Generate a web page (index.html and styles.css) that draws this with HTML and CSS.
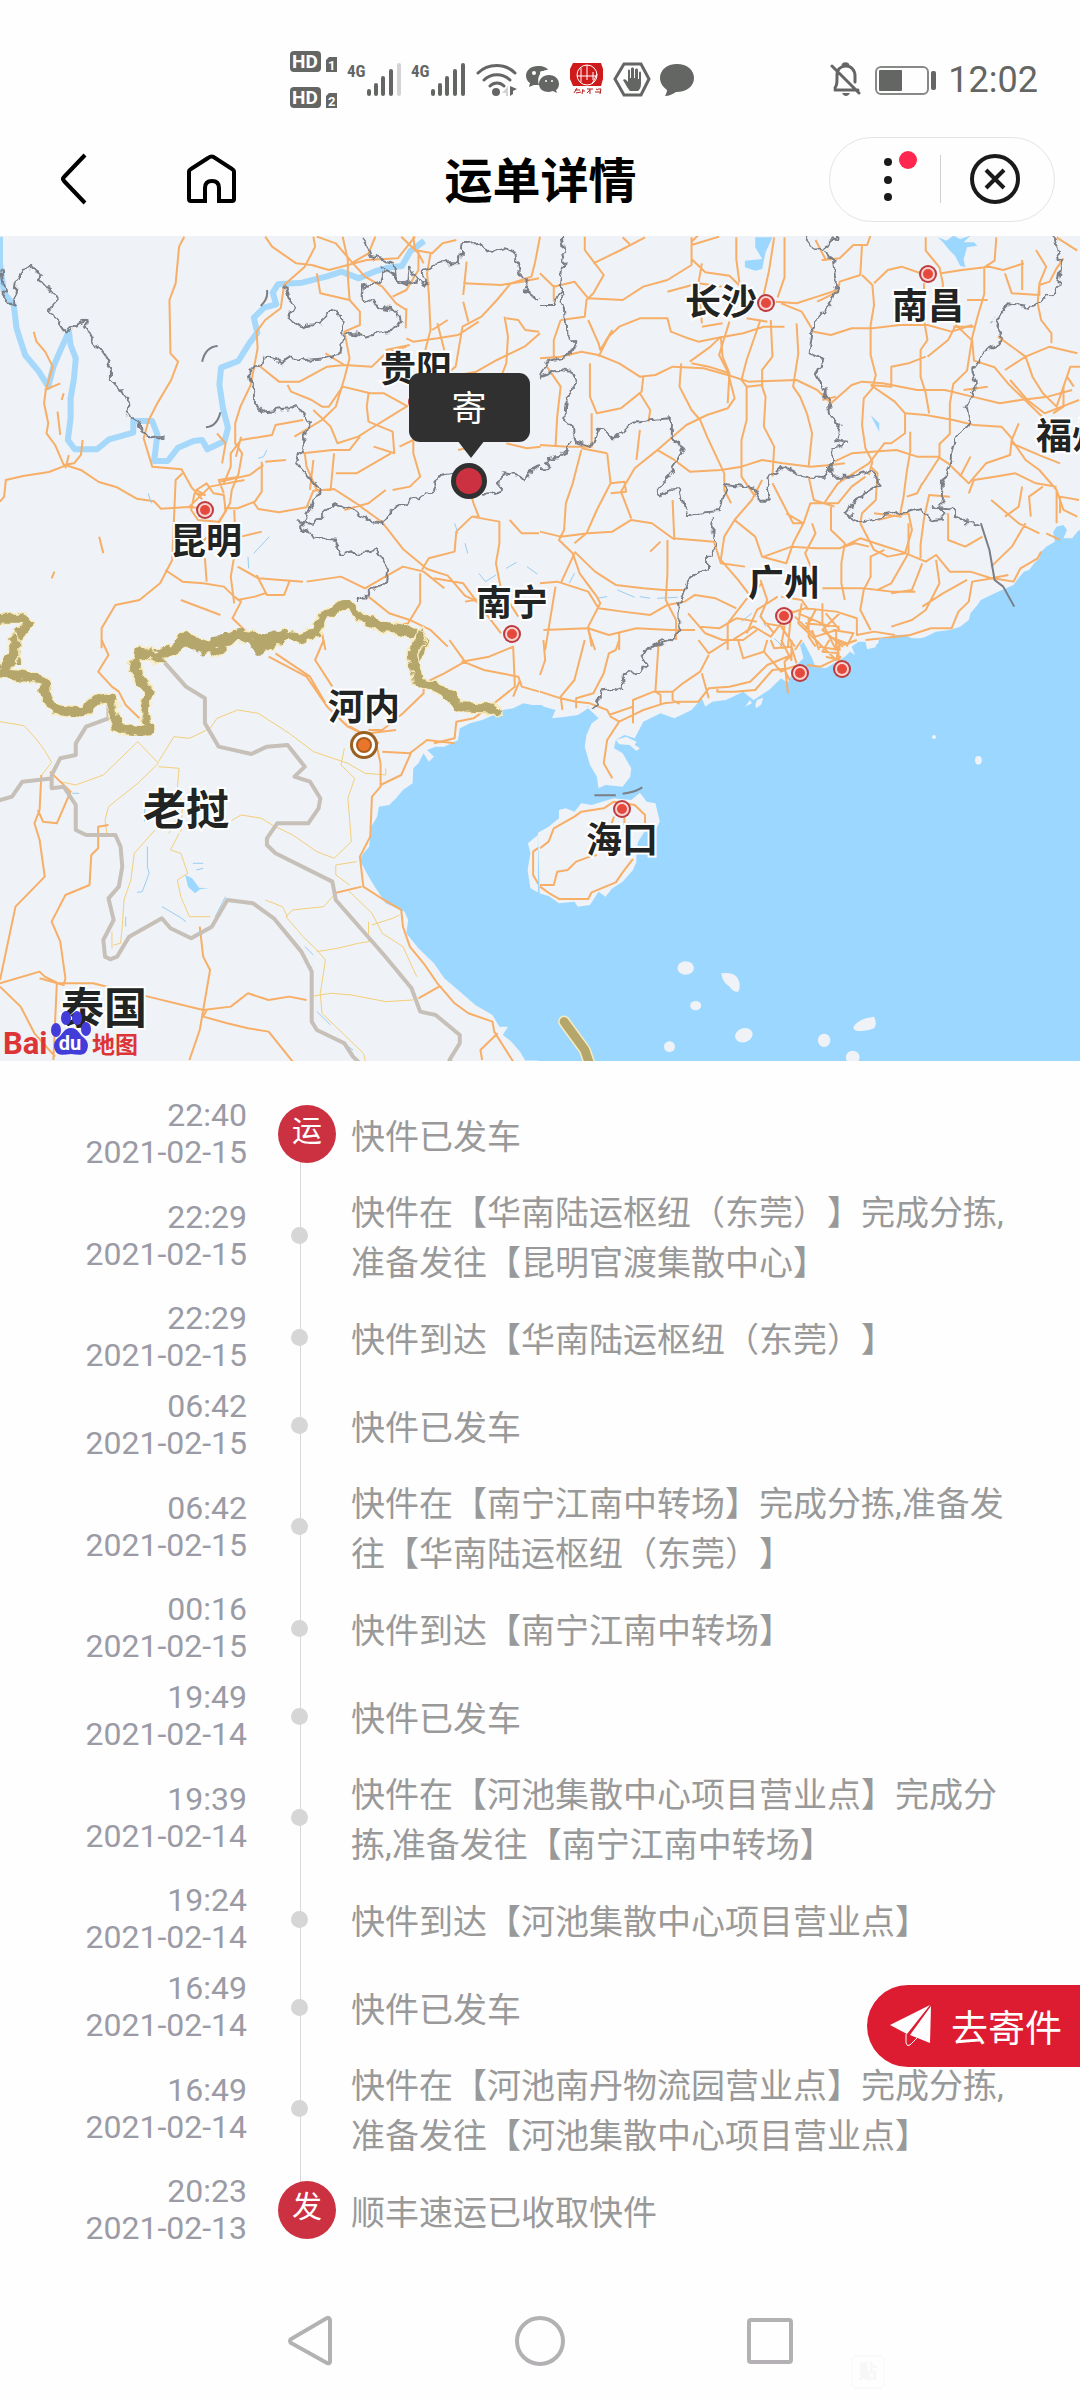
FILE: index.html
```html
<!DOCTYPE html>
<html lang="zh-CN">
<head>
    <meta charset="UTF-8">
    <meta name="viewport" content="width=device-width, initial-scale=1.0">
    <title>运单详情</title>
    <link rel="stylesheet" href="styles.css">
</head>
<body>

<div class="status-bar">
    <div class="status-icons">
        <svg width="50" height="60" viewBox="289 50 50 60">
            <rect x="290" y="51" width="31" height="21" rx="4"/>
            <rect x="290" y="87" width="31" height="21" rx="4"/>
            <path d="M326 60l3-3h8v15h-11zM326 96l3-3h8v15h-11z"/>
            <text class="st-light" x="292" y="68" font-size="19">HD</text>
            <text class="st-light" x="292" y="104" font-size="19">HD</text>
            <text class="st-light" x="328" y="70" font-size="13">1</text>
            <text class="st-light" x="328" y="106" font-size="13">2</text>
        </svg>
        <svg width="56" height="60" viewBox="348 50 56 60">
            <text class="st-net" x="348" y="77">4G</text>
            <path class="st-bars" d="M370 91v3M377 85v9M384 78v16M392 71v23"/>
            <path class="st-bars st-off" d="M400 65v29"/>
        </svg>
        <svg width="56" height="60" viewBox="348 50 56 60">
            <text class="st-net" x="348" y="77">4G</text>
            <path class="st-bars" d="M370 91v3M377 85v9M384 78v16M392 71v23M400 65v29"/>
        </svg>
        <svg width="42" height="60" viewBox="475 50 42 60">
            <path class="st-line" d="M478 73c10-10 27-10 37 0M484 80c7-7 19-7 26 0M490 86c4-4 10-4 14 0"/>
            <circle cx="496" cy="92" r="4"/>
            <path d="M510 86v10l3-2v-3l4-2z"/>
            <path class="st-off-fill" d="M508 86v10h-2v-3h-4z"/>
        </svg>
        <svg width="36" height="60" viewBox="525 50 36 60">
            <path d="M538 66c-7 0-12 4-12 10 0 3 2 6 4 7l-1 4 5-2h5c-3-9 3-16 9-15-1-2-4-4-10-4z"/>
            <path d="M549 75c-6 0-10 4-10 9s4 8 10 8l4-1 4 2-1-3c2-1 3-4 3-6 0-5-4-9-10-9z"/>
            <g fill="#fff"><circle cx="534" cy="73" r="2"/><circle cx="542" cy="73" r="2"/><circle cx="546" cy="81" r="1"/><circle cx="552" cy="81" r="1"/></g>
        </svg>
        <svg width="36" height="60" viewBox="570 50 36 60">
            <path fill="#cf1a1c" d="M574 63h28l2 6v10l-2 7h-28l-3-7v-10z"/>
            <g fill="none" stroke="#fff" stroke-width="1"><circle cx="588" cy="75" r="10"/><path d="M578 76h20M588 65v15M582 68v14M594 72v8M598 74l-5 10"/></g>
            <path fill="none" stroke="#b0201f" stroke-width="1" d="M576 90h5M577 93l5-1M575 93l3-5M584 89l-1 5M583 91h3M588 89h6M591 89v5M588 93l3-3M597 89l2 1M596 92h6M599 89h3l-1 5"/>
        </svg>
        <svg width="38" height="60" viewBox="613 50 38 60">
            <path class="st-line" d="M624 64h17l8 15-8 16h-17l-9-16z"/>
            <path d="M623 80c2-2 4 1 5 2v-11c0-2 2-2 2 0v7h1v-9c0-2 3-2 3 0v9h1v-8c0-2 3-2 3 0v9h1v-6c0-2 2-2 2 0v11c0 4-2 6-3 7h-8c-2-2-5-8-7-11z"/>
        </svg>
        <svg width="36" height="60" viewBox="660 50 36 60">
            <path d="M678 64c-10 0-17 6-17 14 0 5 3 9 7 12 0 2-1 4-2 6 4 0 8-2 11-4 11 0 18-6 18-14s-7-14-17-14z"/>
        </svg>
    </div>
    <div class="status-right">
        <svg width="32" height="36" viewBox="830 62 32 36">
            <path class="st-line" d="M835 90h23M835 88c2-3 2-5 2-13 0-6 4-9 9-9s9 4 9 10v6M832 66l27 27M843 66c0-3 5-3 5 0"/>
            <path d="M842 93h8c-2 4-6 4-8 0z"/>
        </svg>
        <svg width="62" height="30" viewBox="877 64 62 30">
            <rect x="879" y="66" width="52" height="27" rx="5" fill="none" stroke="#878987" stroke-width="2"/>
            <rect x="882" y="69" width="23" height="21" rx="1"/>
            <rect x="934" y="70" width="5" height="19" rx="2"/>
        </svg>
        <span class="clock">12:02</span>
    </div>
</div>

<header class="nav-bar">
    <div class="nav-left">
        <button type="button" class="icon-btn" aria-label="返回">
            <svg width="50" height="54" viewBox="48 152 50 54"><path d="M85 155l-21 22q-2 2 0 4l21 22"/></svg>
        </button>
        <button type="button" class="icon-btn" aria-label="首页">
            <svg width="54" height="54" viewBox="185 152 54 54"><path d="M189 172q0-2 2-3l17-11q4-3 7 0l17 11q2 1 2 3v27q0 2-2 2h-13v-13q0-7-7-7t-7 7v13h-14q-2 0-2-2z"/></svg>
        </button>
    </div>
    <h1>运单详情</h1>
    <div class="capsule">
        <button type="button" aria-label="更多">
            <svg width="110" height="83" viewBox="830 138 110 83"><circle cx="888" cy="162" r="4"/><circle cx="888" cy="180" r="4"/><circle cx="888" cy="197" r="4"/><circle class="unread" cx="908" cy="160" r="9"/></svg>
        </button>
        <button type="button" class="close" aria-label="关闭">
            <svg width="114" height="83" viewBox="940 138 114 83"><circle cx="995" cy="179" r="23"/><path d="M986 170l18 18M1004 170l-18 18"/></svg>
        </button>
    </div>
</header>

<svg class="map" viewBox="0 0 1080 825" role="img" aria-label="物流地图">
    <defs>
        <filter id="rough" x="-5%" y="-5%" width="110%" height="110%" color-interpolation-filters="sRGB">
            <feTurbulence type="fractalNoise" baseFrequency="0.035" numOctaves="2" seed="4"/>
            <feDisplacementMap in="SourceGraphic" scale="32" xChannelSelector="R" yChannelSelector="G"/>
        </filter>
        <g id="city">
            <circle r="9" fill="#bd3b3e"/>
            <circle r="7" fill="#f9d3d0"/>
            <circle r="5" fill="#e5493d"/>
        </g>
    </defs>

    <!-- north west -->
    <g class="tile" transform="translate(0 -6) scale(.3444 .3333)">
        <path class="river" d="M0 20v80l12 90 28 35 8 70 25 80 40 50 27 45 15-60 25-60 20-45 5 40 15 40-5 60-10 60 0 60-8 65 20 28h65l35-30 70-20v-35h55l15 40-7 60-3 20h40l30-40 45-20 25-3 15 28 50-25 10-40-15-60-10-70 5-50 50-20 30-50 25-35-10-45 30-30 35-10-10-35 15-25 70-5 70-18 45-15 50 20 50-22 35-10 40-5 25-45 40-30"/>
        <g class="road">
            <path d="M535 20l-15 30-10 110-18 50 3 160 22 25-20 55-40 70-25 50-15 55 25 85 85 8 30 55 30 35"/>
            <path d="M0 815l12-15 5-50 50-12 75-12 50-20 45 15 50 35 50 15 60 35 50 8 20 22 80-5 60 5"/>
            <path d="M98 305l8 30 25 30 22 45-20 70-5 40 12 60-5 30 25 35 25 60 30-5 20-25 5-45M167 545l8 70M190 715l10-40M288 920l12 50M158 1025l-8 20M185 490l-6 20M525 1110l115 45M130 480l45-20"/>
            <path d="M770 20l20 30 70 50 45 5 50 15 55-15 55-15 90-5 50-65M910 20l5 30-30 60-60 55-10 70-45 35-25 35 3 50-20 110-30 65-15 50 0 60 20 30-10 60-20 50-5 40-45 80-40 40"/>
            <path d="M995 20l15 70 0 50 5 70 30 35 0 40-45 20 15 80-15 60-25 85-40 40-80 50M920 20l55 20 50 60 35 40 50 30 40 50 30 20M920 130l10 60 85 20M1090 20l-20 50-50 30M1165 20l50 50 0 50-35 60-40 20M1200 20l5 40 50 10 30-30 40-10M1250 70l-10 60 5 60 5 110-15 60M1180 235l-2 60M1215 70l15 30"/>
            <path d="M1355 95l-10 100M1345 160l110 5 60-10 50-10M1568 20l-15 80-10 40-60 20-40 50-45 50-55 30-10 60-10 60-50 40M1345 215l15 60M1180 325l20 10 70-10 60-10 60-40M1120 360l70-15M1255 300l45-30M1270 280l20 80M1465 260l10 60-5 80-15 40M1470 265l35 5 20 30 40 5M1568 310l-45 40-80 40-60 35-50 10"/>
            <path d="M750 405l60 50 60 0 80-45 50-5 80 5 40-40 60-20M835 465l10 20 60 25 30 20 20 0 40-60 80 20 40 0 70 40M1070 490l-5 40 5 45 70 30 5 65-60-20M1180 530l-110 70-30 20-60 20-20-50-50-50M1045 620l-30 40-50 0-85 10M885 670l5 40 30 70 40 0 10-110M975 730l60 0 50-30 50-30M880 570l-80 15-10 30-90 15-30 40 0 40-20 50M760 695l0 90-20 30-50 20-40 0M770 695l60-5M640 755l85-20 40-30M630 610l25 30-10 60M700 620l-15 60M945 370l55 35M900 780l10-90M1160 650l40-20"/>
            <path d="M735 815l15 22 60 10 80-15 20-50 60-5 60 40 80 60 60 80 70 60 60 20 50 60 40 20M1000 840l70-20 50-40M1140 780l50-10 30-30-20-70 0-40M1225 1020l20-35 75-20 5-60 45-45h20l-15-40-15-50M1370 860l80 15 0 65-10 60 15 80 50 80M1480 870l35 40h50M1220 1030l0 90-35 60-45 10M1260 1045l85 15 50 70 60 80M1330 660l45-10 20-30M1470 640l60 15 40-5M1350 1115l60-10 60 20"/>
            <path d="M530 730l-20 20-5 120-5 120-35 70-60 50-70 15-40 70 0 60M480 1020l50 35 60 5 60 10 30 30 20 15-25 50 50 50 30 50M680 840l5 110-15 90 10 80M690 1010l60 35 130 10M745 1035l30 60 50 0 15-40M890 1055l100-15 70 35 50-30 60-35 60 15 60 50M700 920l60-15M595 985l5 70M1070 1100l60 50 60 20 60 30 50 50M690 1110l50-10 30-10M935 1210l10 50"/>
            <path d="M595 795l-30-5-10 50 20 30 60 5 20-30-5-50-30-5-20-30-30 20zM550 830l60-60 100-20M650 790l-15-40 60-10"/>
        </g>
        <path class="lake" d="M775 660l-10 20-15 5M782 920l-45 50M720 980l2 35M1320 880l10 30M1350 940l8 30M1390 1030l20 25 30-20M1470 1015l30-18M1530 1010l30 22M430 790l10 30"/>
        <g class="border" filter="url(#rough)">
            <path d="M0 120l12 70 28 40 5-70 40-55 60 70 25 35-25 30 45 70 20-20 35-15 40 80 40 60 0 40 50 55-10 40 30 20 10 25 30 30 40-5"/>
            <path d="M1055 20l20 60 70 20 10 60 30 5 5-55 25 50 20 10-5-50 45-20 60 0 5-60 60-5 20 35 50-15 30 15 10 65 25 20-5 30 30 25"/>
            <path d="M825 165l10 30 20 35-20 30 40 30 50-10 35-35 30 10 5 60-10 60-40 10-60 5-40-10-30 20-40-20-55 60 20 50 0 35 20 20 80-10 20-15 40 60-20 60-20 60 70 80-40 80-10 25 25 40 70 10 20 40 60-10 40-5 30 50-5 60-40 10-40 40"/>
            <path d="M1000 310l50 10 90-20 20-20-10-40-30-5-70-30 5-40 50-10 10-40 60 45 30-10M865 870l40 15 60-60 60 15 60 40 25 5 25-45 80-40 45-15 15-50 60-10M1400 795l50-15 10-50 50 10 20 20 15-45 20-10"/>
        </g>
        <path class="border" d="M775 180q5 25-18 48M587 395q10-45 45-47M598 592q32-2 42-45"/>
        <g class="nation" filter="url(#rough)">
            <path class="nation-glow" d="M-20 1165h85l15 20-40 50 5 60M420 1280l40-5 50-15 30-40 50 25 40 20 50-50 70 5 30 30 40-35 50 10 50-20 15-45 70-40 40 40 60 30 60 10 55 10 15 25-30 50"/>
            <path d="M-20 1165h85l15 20-40 50 5 60M420 1280l40-5 50-15 30-40 50 25 40 20 50-50 70 5 30 30 40-35 50 10 50-20 15-45 70-40 40 40 60 30 60 10 55 10 15 25-30 50"/>
        </g>
    </g>

    <!-- north east -->
    <g class="tile" transform="translate(540 -6) scale(.3444 .3333)">
        <path class="sea" d="M1580 890l-20 15-15 20h-25l10-25-10-15-20 5-10 15 5 30-25 15-15 15-5 20-15 15-15 20-15 5-20 25-10 15-45 20-20 10-30 15-10 15-20 25-5 20-25 20-30 10-40 5-30 15-30 10-30-15h-30l-30 15-25 15 0 30h610z"/>
        <path class="sea" d="M625 22h50l-20 45-10 50-20 5-30-10v-20l50-5-20-35zM1155 22l15 15 20 25 15 15 15 30 15 5-5-25 10-35 30-5-10-10-30 0 20-20-30 10-20-10-20 15zM960 555l25 25 0 25-15-30z"/>
        <path class="lake" d="M165 1105l30-5M85 1060l15-30M225 1080l50 22M290 1100l30 5M340 1105l60-3M585 1175l30-25M640 1150l15 40M680 1225l20 20"/>
        <g class="road">
            <path d="M130 20l0 40 55 75-30 55-20 20-5 50-70 10M155 100l80-40 70-38M240 22l20 20M0 130l40 40 60-15 40 50 100 5 60-40 70-20 70-45v-70l20-20M40 165v50M440 22l0 65 40 40 70 10 30 30-10-80 0-65M470 100l-10 60 10 120M370 185l90-25 70 10M440 45l80-25"/>
            <path d="M0 385l60-5 60-15 50 10 60 25 60 40 45-5 50-25 90 5 70 20 60 20 140-5 60 30 40 40 60-55 30-10 60 5 100 20 80 0 80 20 80 20 60-10 80-10 70-20M170 380l30-60 30-30 60-25 80 0 10 40 50 20 30 10 50-10 80-15 60-20 60 0M210 300l-35 60-5-20-30-70M145 400l0 100 20 50 70-15 60-50 5-45M150 550l0 100-70 0-80-5M290 490l30 50-5 35"/>
            <path d="M20 410l40 60-10 90-5 90M120 660l-25 100-20 60-5 80-15 30 40 40 20 60 50 70 10 20-35 70 10 60M195 670l10 90-40 80-30 70-35 30M205 760l40-5 5 30-45 5M0 905l60 15 80-10 70-5 55-35 60 10 60 45 60 5 60 5 20 65 70 10M265 865l-30-80 40-70 60-50 90-80 60-30 60-20 20-30-20-80-25-50 30-100M120 655l75 15M280 690l10-90M340 660l50 30 45 35 90-5 60-10 60-20 60 10 80 10 60-5 40-5M410 400l-5 70 35 70 25 30 20 50 50 110 0 50 20 40"/>
            <path d="M680 22l-15 100-15 70M710 22l0 120-20 60M685 215l60 5 60-20 60-20M700 220l60 25 35 60 50 10 60-20 60 0 80-10 80 0 70 20 60-20M640 270l-20 60-20 60-15 60 15 20 0 100-15 60 0 110 40 60M670 270l5 110-30 40 0 50 10 30-5 90 30 60-5 90M745 280l5 90-15 100 20 30 20 50 15 60-10 100M600 265l60 10M600 470l45-5M435 395l60-45 30-30M525 320l5 60 20 50-5 90M440 400l50 10 60 20"/>
            <path d="M800 30l30 60-10 0 50-5 40-40 40 0 10-30M820 90l50-5M935 45l-5 90-60 20-5 30-60 30M935 135l30 30 5 60-10 60 0 90 15 60-10 40-25 30-5 80 10 70 20 40-10 40M970 160l40-40 40-10 70 25M1120 22l0 40 40 50 10 50-5 60 30 50 60 60 5 60 60 20 40 50 60 60 60 60M1115 160l0 110 10 60-20 30 0 80 15 50 10 60M1125 380l60-50 20-40M1165 130l60-10 80-10 40 10 60-20M1325 22l-5 70-30 20 0 80-20 70-15 60-15 100-40 40-10 60 0 90-30 30 0 40-50 80M960 465l60 5 0-60 50-10 50-20M960 465l70 50 30 35 0 60-40 30-20 0-45 60-90 60-40 60"/>
            <path d="M1060 550l60 5 80 15 60 15 80 5 30 35-5 50-70 25-50 60-60-60-30-20-60 0-60-20-70 5-60 5-50 25M1075 605l0 60-10 60-10 80-10 50M960 710l20 20-5 80-40 40-5 30 40 80 40 20 50-10 20-70-10-50-50 10-40 10M1110 760l-15 30-30 10M1190 800l-60-5-15 70-10 80 0 40M1185 850l0 80 50 20 50-30M1245 790l15-40 60-10 60-10 60 30 60 10M1310 810l80 70 60 30M1460 770l-40 30 5 60M1350 130l20 60 80 5 0-30 30-10 20-40 20-30M1400 90l0 30 0 60M1440 60l30 50-20 50-5 60 10 50 30 40 0 30M1330 320l80 60 20 60 30 50 40 40 20-60 20-60 40 0M1350 420l60-40 70-30 80 20M1365 450l50 60 50 40 100-40M1390 580l-20 50 40 60 40 30 50 60 0 100M1500 780l20 60 40 20M1310 1010l60-60 40-70M1455 965l-10 20-50 30-20 40-60-10-60 10-10 60-30 30-20 50-60 0-60 20-80 10-50 5M1470 910l40 20M1500 22l60 40M1510 850v-50l55 10"/>
            <path d="M675 760l30 60 30 60 30 0 20-60 50 0 30 0 40-50 40-30M780 740l15 70 60 20M845 830l0 70 40 40-10 60 0 60 10 50M765 880l-50-30M765 880l-30 60-20 60-70-20-20-60-60-50 50-60 30-60M565 870l-30 50-10 70 50 60 30 40M650 980l80-30 70 5 70 0 60-30 60 20 60 20 70 30 30-20 40 50 60 0 60 20 50-10M790 880l10 30-30 60 20 50M885 950l30-10 40 10M1000 960l-40 20 0 60-20 40-10 60 30 60M1070 880v90l-50 90-40 20M1150 990l10 70-40 80-40 30-60 20M1110 1000l-30 80-60 10M1240 1050l-70 40-60 40M820 1075l60 0 60 0 80 10 70 0"/>
            <path d="M0 1060l50-5 90 30 30 50 70 10 80 10 50-30 50-10 30-20 60 10 60 30M100 965l60 60 60 40 80 10 60 5 60 0M370 930l0 100-5 80 30 60 0 60M320 965l30-30M10 1200l130-5 60 20 80-20 100 5 70 0M45 1070l-30 190M140 1200l20 60M230 1210l0 50M430 1150l50 60 50 20 60 0 40-30M100 970l-40 90M390 930l-5-120M545 1260l0-80 60-80 40-40M460 1190l60 5 50-30 60 10M560 1230l60-40 50 30 30-40"/>
            <path d="M710 1155l60-20 90 10 60 20 0 50 50-10 60 10M700 1100l60 10 20 30M740 1160l60 60 60-20 0 50M760 1120l-10 60 60 60M700 1190l40 60M820 1120l0 60 40 80M870 1150l-50 50 60 50M780 1160l0 60 20 30M660 1110l-20 50 40 50M800 1140l-30 60M730 1140l-10 110M850 1200l60 10-20 40M690 1100l-60 40-30 70M640 1050l20 60M750 1150l90 40M770 1180l100 10M790 1200l20 60M840 1220l50 20M650 1180l60 10-10 60M830 1150l40 50"/>
            <path d="M970 850l80 10M860 500l-40 10M1230 480l70-10M1240 210l60 0M1200 290l60 0M1220 740l30-60M1370 640l90 40 50 20M1400 770l-10 60-40 30M1520 470l0 60-30 20M1530 440l20 30M470 290l60-10M60 270l-20 60 0 60"/>
        </g>
        <g class="border" filter="url(#rough)">
            <path d="M60 20l10 60-10 100 15 50 5 90 20 20-20 40-60 15-20 40M0 440l50-20 40 5 15 40-30 40-5 70 25 20 10 40 45 15 20-55 50 30 50-50 110-10v60l35 25-20 50-30 50-20 30 5 25 30-30 30 0 15 85 40-15 55-5 20-75 80 10 20 40 30 0-10-70 50-35 60 30 60 0 10-30 10 30 60 0 50-15 30 35-60 40-40 50 40 25 60-15 60-15 60-10 30 40 30-5-5-50 5-60 20-60 10-60 45-60-10-50 30-60-10-50 40-60 50-30-30-60 50-50 60 10 60-35 20-30 10-60-20-80-40-40 0-40M770 20l30 40 50 20 10 90-20 60-50 60-10 80 40 20-20 40 30 60 10 60 30 40-10 40 30 5-40 20-5 90"/>
            <path d="M0 225l40 0 20-50M820 60l40-35M1135 830l60 10 40 40 45 0M505 860l-5 60 15 30-30 30 0 30-60 50-20 60 0 80-40 40-60 18M0 715l30 0-20-25 50-10 30-50"/>
        </g>
        <path class="border" d="M1280 880l25 80 15 90 25 20 32 60"/>
    </g>

    <!-- south west -->
    <g class="tile" transform="translate(0 404) scale(.3444 .3333)">
        <path class="sea" d="M1575 195h-30l-25-5-30 15-30 5-15 10-45 20-35 10-30 15-5 35-40 20h-25l-25 10 20 20-15 15-15-25-15 30-15 15-2 45-28 20-20 25-20 20-30 5-5 30-17 30-6 60-17 20-10 20 20 40 20 35 35 55 55 25 10 25-5 40 35 45 45 45 30 45 40 35 50 45 50 30 20 35h25l-15 25 25 20 25 30 15 27h53z"/>
        <path class="land" d="M1575 575l-25 20-17 15 7 30-8 50 8 55 35 20z"/>
        <path class="sea" d="M538 705l20 10 20 28 28 2-25 3-15 12-20-20z"/>
        <path class="lake" d="M560 670h30M570 690l20-5M428 620l0 60 5 20-20 55-15 2M470 800l50 30 20 15M625 830l30-60M905 980l-3 80M885 920l25 25M920 1115l40 40M985 1200l40 30M420 485v60M210 460h20M365 830v30"/>
        <g class="road thin">
            <path d="M0 245l70 12 35 40 25 35 20 35-30 40M155 405l20 20 45 10 80-30 100-100 60 65-60 60-85 70-10 40 5 40M460 365l45-75 45 5 60-30 20-30 60-25 60 10 90 60 70 55 100 35 50 30 60 5 0-20M460 380l60 5-5 60 15 50-5 80M1000 325l-10 50 40 40-20 60 5 60 5 70-50 50-50-20-70-50-60-30-30-20-60-10-50 30-50 0-60 10M520 580l-25 50 30 10 20 60-30 20 10 50 25 60 60 0M450 570l-60 70-10 80-20 60-5 80-5 50-20 5M1035 665l-60 10 0 30 40 30M1010 750l70 70 30 60 60 40 40 90M1080 855l60-20 20-10M970 765l-30 35-90 10-20 20 50 60 40 40 25 30-15 100 5 60 60 60 60 60 10 40M770 780l50 20 15 30M920 935l60-10 60-15 30-5 0-60M900 1070l60-10 60 5 100 20 80-5M325 875v50M490 580l30-60"/>
        </g>
        <g class="road">
            <path d="M295 0l20 45-30 50 40 45 20 15 20 40 40 40M780 50l110 60 60 90 60 60 60 30 30 20M800 40l100 70 45 80M940 0l-25 60 50 80M960 210l40 40 60 35M1090 300l15 70 0 70-25 30-5 120-30 60 10 90 60 40 50 30 5 50 20 60 40 50 40 60 50 60 40 30 70 25 5 30 55 90M1110 335l80 5 50-40 80 10M1105 435l60-30 30-70M1050 740l-80 20M1275 1040l-60 35M1445 1180l-50 50 5 30M1070 270l40 0 60-50 60-60 0-30 60-30 60-35-45-65M1345 65l60 25 100 20 10 30 50 15M1340 65l80-15 70-30 5 120-60 50-60 45-50 10-5 50-60 15M1510 120l-20 50M1150 270l-80 10"/>
            <path d="M120 405l-5 105-15 40 15 50 15 110-85 90-45 220M110 510l15 35 40 5 40-95-60-60M315 555l-30 5 0 65-20 20-5 90-70 30-40 80 25 60 15 110-5 20-70-20M0 1030l115-35 15 15 40 20 100 0 160 40 160 40 80-10 50-40 60 20 60-10 50 10M580 860l10 90 20 40-20 120-10 60-30 90M600 1110l-10 20 70 20 60 15 60 10 70 90M0 1040l60 60 40 80 60 70M165 1030l-10 230"/>
            <path d="M1568 620l-20 15 0 70 20 35"/>
        </g>
        <path class="state" d="M450 35l90 105 55 35v75l40 70 95 22 45-22 60-5 50 65-30 30 45 15 30 50-5 30-30 45h-90l-30 45 0 20 25 25 165 85 10 55 140 165 80 100 25 70 45 10 70 60 0 25-30 50 20 25M315 180v55l-65 25-30 50v35l-45 10-25 50 0 40 35-5 35 55v75l30 15h85l15 35 5 60-10 60-30 35 15 65-30 60 5 50 15 8 20-8 35-60 95-55 25 30 60 30 60-35 45-80 75 10 60 45 80 100 30 60v150l15 25 80 40 25 40 25 25v40M155 415l-90 10-30 45-40 12"/>
        <g class="nation" filter="url(#rough)">
            <path class="nation-glow" d="M40 0l0 40-35 60 60 8 60 10 10 50 25 40 80 10 40-40 40-5 20 90 50 10 45 0-15-50 10-70-40-60 10-60 60 20M1220-10l-20 50 15 85 70 25 50 50 100 5 10 10"/>
            <path d="M40 0l0 40-35 60 60 8 60 10 10 50 25 40 80 10 40-40 40-5 20 90 50 10 45 0-15-50 10-70-40-60 10-60 60 20 80-60 50 40 40-30 70-20 55 45 10-30 60-20M1220-10l-20 50 15 85 70 25 50 50 100 5 10 10"/>
        </g>
    </g>

    <!-- south east -->
    <g class="tile" transform="translate(540 404) scale(.3444 .3333)">
        <path class="sea" d="M985-5l-5 25-30 8-5-23h-20l-20 15 10 25-15-10-15 15-15 10-40 25-30-5-10-25-25-50-10 10 10 40-25 25-20 50-20-15-35 35-45 30-30-25-50 25-40 5-20 15-10-25-30 35-30 15-20 10-40-15-50 25-25 50-30-10-25 15-5 25 25 15 25 45-3 25-22 30-50-5-20 10-5-35-20-35-15-55 5-35 15-35 20-15-30-30-30 20-35 5-40 5 10-25-51-15v1070h1580v-1270z"/>
        <path class="land" d="M-6 578l31-18 30-25v-25l20-5 25 10 20-25 30 5 30-10 35-10 50 5 25-22 20 27 25 5 13 55-13 25-25-5-25 40-5 30 0 30-10 25-30 35-30 20-20 25-20-15-25 40-35 5-10-15-45 5-30-22-26-8zM220 300l30-10 30 15-5 10 15 10-10 8-20-18-30-2zM595 200l15-20 5 10zM625 195l5-15 18-7-5 20-15 12z"/>
        <g class="land">
            <ellipse cx="423" cy="984" rx="24" ry="20"/>
            <path d="M526 1000q30-5 45 10 15 20 5 45-15 3-25-15-20-10-25-40z"/>
            <ellipse cx="452" cy="1097" rx="16" ry="14"/>
            <ellipse cx="592" cy="1186" rx="26" ry="21" transform="rotate(-20 592 1186)"/>
            <ellipse cx="376" cy="1220" rx="16" ry="16"/>
            <path d="M910 1160q15-25 60-30 10 20 0 35-20 10-45 8-15 0-15-13z"/>
            <ellipse cx="825" cy="1201" rx="18" ry="20"/>
            <ellipse cx="908" cy="1252" rx="20" ry="20"/>
            <ellipse cx="1273" cy="361" rx="10" ry="13"/>
            <ellipse cx="1144" cy="291" rx="6" ry="6"/>
        </g>
        <g class="road">
            <path d="M10 0l5 60-15 45M130 0l-30 120-40 50 5 40M230 0l-10 30-20 10-15 60-30 60-50 15v30M345 0l-10 155 15 10 0 30M0 155l60 20 45 10 40 5 50 20 10 20 25 15 50-25 20-10 60-20 40-5 60 0 30-40 60-5 60-15 50-50 70-30-20 20 10 95M575 0l15 55 60-20 10-35M460 0l30 40 60-40M490 45l-25 50-50 35-30 25-55 0-60 25 0 70M200 225l70-25M385 155v25l20 12M230 245l-35 55-10 70 25 45M470 100l20 75M515 140l0 15 50 0 60-5 50-60 50-5M650 35l50 60 20-10 30-10M710 90l15 30M775 75l40 5 60-30"/>
            <path d="M0 625l25-20 15-40 60-35 20-15 65-10 30-20 60 10 30 30v30M215 530l-10 30M245 530v25M0 735l40 0 10-40 30-5 25-25 40-15 20-5M0 740l30 22 25 15h85l10-20 70-30 20-30 30-40"/>
            <path d="M670 0l10 25 50-5 15 50M700 0l30 60 0-60M760 0l-20 30M800 0l60 60 10-50 30 0M840 0l-20 35 50 5M810 20l60 10 0-30M830 50l40 10-10-50M880 15l40-15"/>
        </g>
        <path class="border" filter="url(#rough)" d="M360 0l-55 30-10 20 15 30-20 15-50 5 5 45-70 10-10 40-20 10"/>
        <path class="border" d="M158 466h62M240 461q35-4 57-19"/>
        <g class="nation"><path class="nation-glow" d="M70 1145l60 85 15 45"/><path d="M70 1145l60 85 15 45"/></g>
    </g>

    <g class="place">
        <text x="416" y="146">贵阳</text>
        <text x="206" y="318">昆明</text>
        <text x="512" y="380">南宁</text>
        <text x="721" y="79">长沙</text>
        <text x="928" y="83">南昌</text>
        <text x="1072" y="213">福州</text>
        <text x="784" y="360">广州</text>
        <text x="364" y="484">河内</text>
        <text x="622" y="617">海口</text>
    </g>
    <g class="place country">
        <text x="186" y="589">老挝</text>
        <text x="104" y="788">泰国</text>
    </g>

    <use href="#city" x="205" y="274"/>
    <use href="#city" x="512" y="398"/>
    <use href="#city" x="766" y="67"/>
    <use href="#city" x="928" y="38"/>
    <use href="#city" x="784" y="380"/>
    <use href="#city" x="800" y="437"/>
    <use href="#city" x="842" y="433"/>
    <use href="#city" x="622" y="573"/>
    <use href="#city" x="417" y="166"/>
    <circle cx="364" cy="509" r="14" fill="#99601f"/>
    <circle cx="364" cy="509" r="11" fill="#fff"/>
    <circle cx="364" cy="509" r="8" fill="#a85f1e"/>
    <circle cx="364" cy="509" r="6" fill="#e9762c"/>

    <g class="callout">
        <rect x="409" y="137" width="121" height="69" rx="11"/>
        <path d="M457 204h28l-14 18z"/>
        <text x="469" y="185">寄</text>
        <circle cx="469" cy="245" r="18"/>
        <circle cx="469" cy="245" r="13" fill="#cc3142"/>
    </g>

    <g class="baidu">
        <text x="3" y="818" font-size="31">Bai</text>
        <g fill="#423cd8">
            <ellipse cx="56" cy="794" rx="5" ry="7"/>
            <ellipse cx="66" cy="782" rx="5" ry="7"/>
            <ellipse cx="77" cy="782" rx="5" ry="7"/>
            <ellipse cx="86" cy="793" rx="5" ry="7"/>
            <path d="M71 792c-7 0-8 6-12 9-5 4-6 8-4 13 2 6 8 5 16 4 8 1 14 2 16-4 2-5 1-9-4-13-4-3-5-9-12-9z"/>
        </g>
        <text class="du" x="70" y="814" font-size="20">du</text>
        <text x="92" y="817" font-size="23">地图</text>
    </g>
</svg>

<main>
    <ol class="timeline">
        <li>
            <time datetime="2021-02-15T22:40">22:40<br>2021-02-15</time>
            <div class="mark"><span class="badge">运</span></div>
            <p>快件已发车</p>
        </li>
        <li>
            <time datetime="2021-02-15T22:29">22:29<br>2021-02-15</time>
            <div class="mark"><span class="dot"></span></div>
            <p>快件在【华南陆运枢纽（东莞）】完成分拣,准备发往【昆明官渡集散中心】</p>
        </li>
        <li>
            <time datetime="2021-02-15T22:29">22:29<br>2021-02-15</time>
            <div class="mark"><span class="dot"></span></div>
            <p>快件到达【华南陆运枢纽（东莞）】</p>
        </li>
        <li>
            <time datetime="2021-02-15T06:42">06:42<br>2021-02-15</time>
            <div class="mark"><span class="dot"></span></div>
            <p>快件已发车</p>
        </li>
        <li>
            <time datetime="2021-02-15T06:42">06:42<br>2021-02-15</time>
            <div class="mark"><span class="dot"></span></div>
            <p>快件在【南宁江南中转场】完成分拣,准备发往【华南陆运枢纽（东莞）】</p>
        </li>
        <li>
            <time datetime="2021-02-15T00:16">00:16<br>2021-02-15</time>
            <div class="mark"><span class="dot"></span></div>
            <p>快件到达【南宁江南中转场】</p>
        </li>
        <li>
            <time datetime="2021-02-14T19:49">19:49<br>2021-02-14</time>
            <div class="mark"><span class="dot"></span></div>
            <p>快件已发车</p>
        </li>
        <li>
            <time datetime="2021-02-14T19:39">19:39<br>2021-02-14</time>
            <div class="mark"><span class="dot"></span></div>
            <p>快件在【河池集散中心项目营业点】完成分拣,准备发往【南宁江南中转场】</p>
        </li>
        <li>
            <time datetime="2021-02-14T19:24">19:24<br>2021-02-14</time>
            <div class="mark"><span class="dot"></span></div>
            <p>快件到达【河池集散中心项目营业点】</p>
        </li>
        <li>
            <time datetime="2021-02-14T16:49">16:49<br>2021-02-14</time>
            <div class="mark"><span class="dot"></span></div>
            <p>快件已发车</p>
        </li>
        <li>
            <time datetime="2021-02-14T16:49">16:49<br>2021-02-14</time>
            <div class="mark"><span class="dot"></span></div>
            <p>快件在【河池南丹物流园营业点】完成分拣,准备发往【河池集散中心项目营业点】</p>
        </li>
        <li>
            <time datetime="2021-02-13T20:23">20:23<br>2021-02-13</time>
            <div class="mark"><span class="badge">发</span></div>
            <p>顺丰速运已收取快件</p>
        </li>
    </ol>
</main>

<a class="send-btn" href="#send">
    <svg width="42" height="42" viewBox="0 0 42 42">
        <path fill="#fff" d="M0 20L40 0 17 29zM41 1l-1 37-20-8z"/>
        <path fill="none" stroke="#fff" stroke-width="1" d="M16 29v9q1 4 4 2l7-7"/>
    </svg>
    去寄件
</a>

<footer class="sys-nav">
    <button type="button" aria-label="后退"><svg width="52" height="54" viewBox="0 0 52 54"><path d="M46 6v42q-1 2-3 1L7 29q-2-2 0-4L43 4q2-1 3 2z"/></svg></button>
    <button type="button" aria-label="主屏幕"><svg width="52" height="54" viewBox="0 0 52 54"><circle cx="26" cy="27" r="23"/></svg></button>
    <button type="button" aria-label="最近任务"><svg width="52" height="54" viewBox="0 0 52 54"><rect x="5" y="6" width="42" height="42" rx="2"/></svg></button>
    <svg class="watermark" width="34" height="34" viewBox="0 0 34 34"><rect x="1" y="1" width="32" height="32" rx="5"/><text x="8" y="23">贴</text></svg>
</footer>

</body>
</html>
```
FILE: styles.css
```css
* {
    box-sizing: border-box;
}
body {
    margin: 0;
    background-color: #fefefe;
    font-family: Roboto, "Noto Sans CJK SC", sans-serif;
    text-spacing-trim: space-all;
}
button {
    padding: 0;
    border: none;
    background: none;
    cursor: pointer;
}
svg {
    display: block;
}

/* status bar */
.status-bar {
    display: flex;
    justify-content: space-between;
    align-items: center;
    height: 122px;
    padding: 38px 42px 0 289px;
    color: #646664;
}
.status-icons, .status-right {
    display: flex;
    align-items: center;
    gap: 8px;
    fill: #646664;
}
.status-right {
    gap: 12px;
}
.clock {
    font-size: 36px;
    line-height: 42px;
}
.st-light {
    fill: #fff;
    font-weight: bold;
}
.st-net {
    font-family: "Roboto Condensed", Roboto, sans-serif;
    font-weight: bold;
    font-size: 17px;
}
.st-bars, .st-line {
    fill: none;
    stroke: #646664;
    stroke-width: 4;
    stroke-linecap: round;
}
.st-line {
    stroke-width: 3;
}
.st-off {
    stroke: #d5d2d5;
}
.st-off-fill {
    fill: #d5d2d5;
}

/* title bar */
.nav-bar {
    display: grid;
    grid-template-columns: 1fr auto 1fr;
    align-items: center;
    height: 114px;
    padding: 0 25px 0 48px;
}
.nav-left {
    display: flex;
    gap: 87px;
}
.icon-btn svg {
    fill: none;
    stroke: #000;
    stroke-width: 4;
}
.nav-bar h1 {
    margin: 0;
    padding: 6px 22px 0 0;
    font-size: 48px;
    line-height: 60px;
    font-weight: bold;
    color: #000;
}
.capsule {
    display: flex;
    justify-self: end;
    border: 1px solid #e4e4e4;
    border-radius: 43px;
}
.capsule svg {
    fill: #1a1a1a;
}
.capsule .unread {
    fill: #ff274d;
}
.capsule .close {
    background: linear-gradient(#d0d0d0, #d0d0d0) no-repeat left center / 1px 48px;
}
.close svg {
    fill: none;
    stroke: #1a1a1a;
    stroke-width: 4;
}

/* map */
.map {
    width: 100%;
    background-color: #eff2f7;
}
.tile path {
    vector-effect: non-scaling-stroke;
}
.sea {
    fill: #9bd7ff;
}
.land {
    fill: #eff2f7;
}
.lake {
    fill: none;
    stroke: #9bcdf0;
    stroke-width: 1;
}
.river, .road, .border, .state, .nation {
    fill: none;
    stroke-linejoin: round;
}
.river {
    stroke: #a5d8fa;
    stroke-width: 6;
}
.road {
    stroke: #f7ae66;
    stroke-width: 2;
}
.road.thin {
    stroke: #f3d07a;
    stroke-width: 1;
}
.border {
    stroke: #7b7e84;
    stroke-width: 2;
}
.state {
    stroke: #c6c0b8;
    stroke-width: 4;
}
.nation {
    stroke: #b5a66c;
    stroke-width: 9;
    stroke-linecap: round;
}
.nation-glow {
    stroke: #f8ecc0;
    stroke-width: 12;
}
.place {
    font-size: 36px;
    font-weight: bold;
    text-anchor: middle;
    fill: #222423;
    stroke: #fff;
    stroke-width: 4;
    paint-order: stroke;
}
.country {
    font-size: 43px;
}
.callout {
    fill: #303030;
}
.callout text {
    font-size: 35px;
    text-anchor: middle;
    fill: #fff;
}
.baidu {
    fill: #dd3436;
    font-weight: bold;
}
.baidu .du {
    fill: #fff;
    text-anchor: middle;
}

/* timeline */
.timeline {
    list-style: none;
    margin: 0;
    padding: 29px 60px 0 0;
}
.timeline li {
    display: grid;
    grid-template-columns: 247px 104px 1fr;
    align-items: center;
    min-height: 88px;
}
.timeline time {
    text-align: right;
    font-size: 32px;
    line-height: 37px;
    color: #9b9ba5;
}
.timeline p {
    margin: 0;
    padding: 10px 0 5px;
    font-size: 34px;
    line-height: 50px;
    color: #999;
}
.mark {
    display: flex;
    align-items: center;
    align-self: stretch;
    padding-left: 44px;
    background: linear-gradient(#d8d8d8, #d8d8d8) no-repeat 53px 0 / 1px 100%;
}
.timeline li:first-child .mark {
    background-position: 53px 44px;
}
.timeline li:last-child .mark {
    background-size: 1px 44px;
}
.dot {
    width: 17px;
    height: 17px;
    border-radius: 50%;
    background-color: #d6d6d6;
}
.badge {
    width: 58px;
    height: 58px;
    margin-left: -13px;
    border-radius: 50%;
    background-color: #cc3142;
    color: #fff;
    font-size: 30px;
    line-height: 52px;
    text-align: center;
}

/* floating button */
.send-btn {
    position: fixed;
    right: 0;
    bottom: 333px;
    display: flex;
    align-items: center;
    gap: 19px;
    height: 82px;
    padding: 0 18px 0 23px;
    border-radius: 41px 0 0 41px;
    background-color: #de1c31;
    color: #fff;
    font-size: 37px;
    text-decoration: none;
}

/* system keys */
.sys-nav {
    position: relative;
    display: flex;
    justify-content: center;
    gap: 178px;
    padding: 60px 0 32px;
}
.sys-nav svg {
    fill: none;
    stroke: #b3b1b4;
    stroke-width: 4;
}
.sys-nav .watermark {
    position: absolute;
    right: 195px;
    bottom: 11px;
    stroke: #f7f7f7;
    stroke-width: 1;
    font-size: 18px;
}
```
